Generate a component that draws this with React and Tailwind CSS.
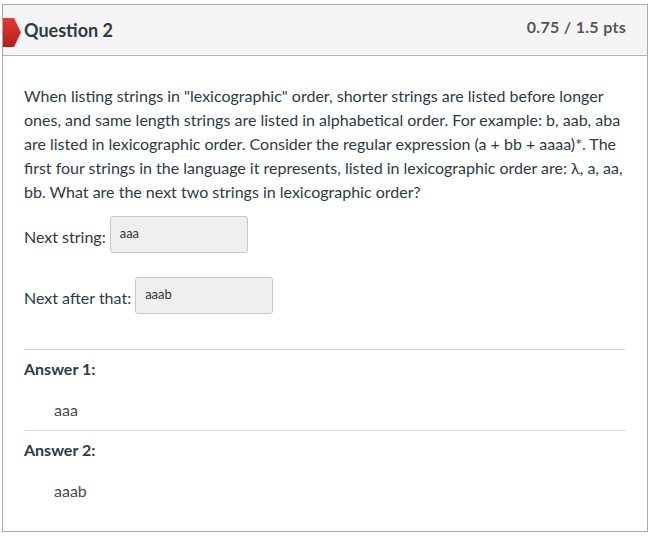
import React from 'react';

const Flag = () => (
  <svg className="absolute left-0 top-[13px]" width="18" height="29" viewBox="0 0 18 29">
    <defs>
      <linearGradient id="flagRed" x1="0" y1="0" x2="0" y2="1">
        <stop offset="0" stopColor="#e53935" />
        <stop offset="1" stopColor="#b71c1c" />
      </linearGradient>
    </defs>
    <polygon points="0,0 11,0 18,14.5 11,29 0,29" fill="url(#flagRed)" />
  </svg>
);

const AnswerBox = ({ value }) => (
  <div className="ml-[1px] h-[37px] w-[138px] rounded-[3px] border border-[#c8c8c8] bg-[#efefef] px-[9px] pt-[8px] text-[13px] leading-[16px] text-[#333]">
    {value}
  </div>
);

export default function App() {
  return (
    <div className="min-h-[541px] bg-white pt-[4px] font-['Lato','Liberation_Sans',sans-serif] text-[#2d3b45]">
      <div className="relative ml-[2px] w-[646px] border border-[#a9a9a9]">
        <div className="flex h-[51px] items-center justify-between border-b border-[#b5b5b5] bg-[#f5f5f5] pl-[21px] pr-[21px]">
          <h2 className="text-[18px] font-bold leading-[24px] text-[#2d3b45]">Question 2</h2>
          <span className="mb-[6px] text-[16px] font-bold tracking-[0.3px] leading-[20px] text-[#555]">0.75 / 1.5 pts</span>
        </div>

        <div className="px-[21px] pt-[28px] pb-[28px]">
          <p className="text-[16px] leading-[24px]">
            When listing strings in "lexicographic" order, shorter strings are listed before longer<br />
            ones, and same length strings are listed in alphabetical order. For example: b, aab, aba<br />
            are listed in lexicographic order. Consider the regular expression (a + bb + aaaa)*. The<br />
            first four strings in the language it represents, listed in lexicographic order are: λ, a, aa,<br />
            bb. What are the next two strings in lexicographic order?
          </p>

          <div className="mt-[12px] flex items-end gap-[3px]">
            <span className="mb-[4px] text-[16px] leading-[24px]">Next string:</span>
            <AnswerBox value="aaa" />
          </div>

          <div className="mt-[24px] flex items-end gap-[3px]">
            <span className="mb-[4px] text-[16px] leading-[24px]">Next after that:</span>
            <AnswerBox value="aaab" />
          </div>

          <div className="mt-[35px] border-t border-[#ddd]">
            <div className="mt-[7px] text-[16px] font-bold leading-[24px]">Answer 1:</div>
            <div className="mt-[17px] pl-[30px] text-[16px] leading-[24px] text-[#4a4a4a]">aaa</div>
          </div>

          <div className="mt-[8px] border-t border-[#ddd]">
            <div className="mt-[7px] text-[16px] font-bold leading-[24px]">Answer 2:</div>
            <div className="mt-[17px] pl-[30px] text-[16px] leading-[24px] text-[#4a4a4a]">aaab</div>
          </div>
        </div>
        <Flag />
      </div>
    </div>
  );
}
